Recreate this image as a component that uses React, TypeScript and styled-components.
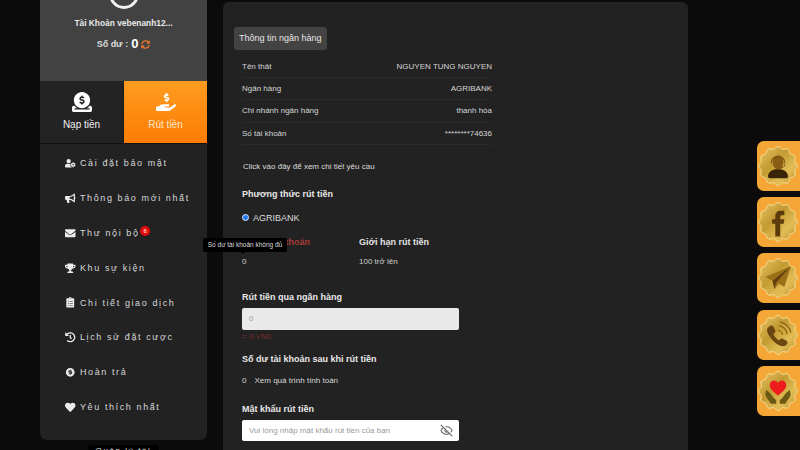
import React from "react";
import styled, { createGlobalStyle } from "styled-components";
import {
  FaUserCog, FaBullhorn, FaEnvelope, FaTrophy, FaClipboardList, FaHistory, FaHeart, FaHandHoldingUsd, FaSyncAlt,
} from "react-icons/fa";
import { FaCircleDollarToSlot } from "react-icons/fa6";
import { RiMoneyDollarCircleFill } from "react-icons/ri";
import { EyeOff } from "lucide-react";

const Global = createGlobalStyle`
  html, body { margin: 0; padding: 0; background: #0b0b0b; }
  body { font-family: "Liberation Sans", Arial, sans-serif; color: #ddd; }
`;

const Page = styled.div`
  position: relative;
  width: 800px;
  height: 450px;
  overflow: hidden;
  display: flex;
  align-items: flex-start;
  gap: 16px;
  padding-left: 40px;
  box-sizing: border-box;
`;

const SideColumn = styled.div`
  width: 167px;
  flex: none;
  display: flex;
  flex-direction: column;
  align-items: center;
`;

const Sidebar = styled.aside`
  width: 100%;
  height: 440px;
  background: #222222;
  border-radius: 0 0 7px 7px;
  overflow: hidden;
`;

const Profile = styled.div`
  height: 81px;
  background: #424242;
  display: flex;
  flex-direction: column;
  align-items: center;
`;

const Avatar = styled.div`
  width: 30px;
  height: 30px;
  margin-top: -21px;
  box-sizing: border-box;
  border: 3px solid #f2f2f2;
  border-radius: 50%;
  flex: none;
`;

const UserName = styled.div`
  margin-top: 9px;
  font-size: 8.4px;
  font-weight: 700;
  line-height: 11px;
  color: #e8e8e8;
`;

const Balance = styled.div`
  margin-top: 8px;
  display: flex;
  align-items: center;
  gap: 3px;
  font-size: 9px;
  font-weight: 700;
  line-height: 14px;
  color: #dedede;
`;

const BalanceValue = styled.span`
  font-size: 13px;
  color: #fff;
`;

const RefreshIcon = styled(FaSyncAlt)`
  width: 9px;
  height: 9px;
  color: #e8742a;
`;

const Tabs = styled.div`
  height: 63px;
  display: grid;
  grid-template-columns: 83px 83px;
  gap: 1px;
  border-bottom: 1px solid #111;
  box-sizing: border-box;
  background: #1a1a1a;
`;

const Tab = styled.div<{ $active?: boolean }>`
  display: flex;
  flex-direction: column;
  align-items: center;
  padding-top: 11px;
  box-sizing: border-box;
  gap: 6px;
  font-size: 10px;
  line-height: 13px;
  color: ${(p) => (p.$active ? "#ffe6c8" : "#f0f0f0")};
  background: ${(p) => (p.$active ? "linear-gradient(180deg, #ff9c20 0%, #fb7c05 100%)" : "#232323")};
  svg { width: 20px; height: 20px; color: #fff; }
`;

const Menu = styled.nav`
  display: flex;
  flex-direction: column;
  padding-top: 2px;
`;

const MenuItem = styled.div`
  height: 34.8px;
  display: flex;
  align-items: center;
  padding-left: 25px;
  gap: 4.5px;
  font-size: 9px;
  letter-spacing: 1.6px;
  color: #d8d8d8;
  white-space: nowrap;
  svg { width: 10.5px; height: 10.5px; color: #ececec; flex: none; }
`;

const Badge = styled.span`
  width: 10px;
  height: 10px;
  margin: -3px 0 0 -4px;
  border-radius: 50%;
  background: #e30c0c;
  color: #fff;
  font-size: 6px;
  letter-spacing: 0;
  line-height: 10px;
  text-align: center;
`;

const Footnote = styled.div`
  margin-top: 5px;
  padding: 0 8px;
  background: #000;
  border-radius: 4px;
  font-size: 8px;
  letter-spacing: 1.6px;
  line-height: 11px;
  color: #ddd;
`;

const Main = styled.main`
  width: 465px;
  height: 460px;
  flex: none;
  margin-top: 2px;
  box-sizing: border-box;
  padding: 25px 0 0 11px;
  background: #222222;
  border-radius: 6px 6px 0 0;
`;

const InfoButton = styled.div`
  display: inline-block;
  height: 23px;
  padding: 0 5px;
  background: #434343;
  border-radius: 3px;
  font-size: 9px;
  line-height: 23px;
  color: #e6e6e6;
`;

const Content = styled.div`
  width: 250px;
  margin-left: 8px;
  margin-top: 6px;
`;

const InfoRow = styled.div`
  height: 22.2px;
  display: flex;
  align-items: center;
  justify-content: space-between;
  box-sizing: border-box;
  border-bottom: 1px solid #2a2a2a;
  font-size: 8px;
  color: #d6d6d6;
`;

const Hint = styled.div`
  margin: 16px 0 0 1px;
  font-size: 8px;
  line-height: 11px;
  color: #dcdcdc;
`;

const SectionTitle = styled.div<{ $top: number }>`
  margin-top: ${(p) => p.$top}px;
  font-size: 9px;
  font-weight: 700;
  line-height: 12px;
  color: #e8e8e8;
  white-space: nowrap;
`;

const RadioRow = styled.div`
  margin-top: 12px;
  display: flex;
  align-items: center;
  gap: 4px;
  font-size: 9px;
  line-height: 12px;
  color: #dedede;
`;

const RadioDot = styled.span`
  width: 7px;
  height: 7px;
  box-sizing: border-box;
  border-radius: 50%;
  background: #1f78f0;
  border: 1.5px solid #dfe8f5;
  flex: none;
`;

const Columns = styled.div`
  margin-top: 12px;
  display: grid;
  grid-template-columns: 117px 1fr;
  row-gap: 8px;
  font-size: 8px;
  line-height: 11px;
  color: #d0d0d0;
`;

const ColumnTitle = styled.div<{ $warn?: boolean }>`
  font-size: 9px;
  font-weight: 700;
  line-height: 12px;
  color: ${(p) => (p.$warn ? "#a83a3a" : "#e4e4e4")};
`;

const FieldBox = styled.div<{ $disabled?: boolean }>`
  margin-top: 5px;
  width: 217px;
  height: ${(p) => (p.$disabled ? 22 : 21)}px;
  box-sizing: border-box;
  padding: 0 6px 0 7px;
  display: flex;
  align-items: center;
  justify-content: space-between;
  border-radius: 2px;
  background: ${(p) => (p.$disabled ? "#e9e9e9" : "#ffffff")};
  font-size: 8px;
  color: #9a9a9a;
  white-space: nowrap;
  svg { width: 13px; height: 13px; color: #666; }
`;

const Converted = styled.div`
  margin-top: 1px;
  font-size: 8px;
  line-height: 11px;
  color: #7c2b2b;
`;

const ResultRow = styled.div`
  margin-top: 10px;
  display: flex;
  gap: 8px;
  font-size: 8px;
  line-height: 11px;
  color: #d8d8d8;
  white-space: nowrap;
`;

const Tooltip = styled.div`
  position: absolute;
  left: 203px;
  top: 238px;
  width: 84px;
  height: 14px;
  background: #000;
  border-radius: 2px;
  font-size: 6.5px;
  line-height: 14px;
  text-align: center;
  color: #dcdcdc;
  white-space: nowrap;
  &::after {
    content: "";
    position: absolute;
    left: 38px;
    top: 14px;
    border: 2.5px solid transparent;
    border-top-color: #000;
  }
`;

const FloatStack = styled.div`
  position: absolute;
  left: 757px;
  top: 141px;
  display: flex;
  flex-direction: column;
  gap: 6.2px;
`;

const FloatTile = styled.div`
  width: 50px;
  height: 50px;
  background: #f4a636;
  border-radius: 7px;
  display: flex;
  align-items: center;
  padding-left: 1px;
  box-sizing: border-box;
  svg { width: 40px; height: 44px; flex: none; }
`;

const scallop = (() => {
  const n = 12;
  const pts: string[] = [];
  for (let i = 0; i <= 144; i++) {
    const a = (i / 144) * Math.PI * 2;
    const r = 20.2 + 1.2 * Math.cos(a * n);
    pts.push(`${(22 + r * Math.sin(a)).toFixed(2)},${(22 - r * Math.cos(a)).toFixed(2)}`);
  }
  return pts.join(" ");
})();

const Medal: React.FC<{ id: string; children: React.ReactNode }> = ({ id, children }) => (
  <svg viewBox="0 0 44 44" preserveAspectRatio="xMidYMid meet">
    <defs>
      <linearGradient id={id} x1="0" y1="0" x2="1" y2="1">
        <stop offset="0" stopColor="#e7c766" />
        <stop offset="0.4" stopColor="#c39a32" />
        <stop offset="0.7" stopColor="#e2bd55" />
        <stop offset="1" stopColor="#b88a28" />
      </linearGradient>
    </defs>
    <polygon points={scallop} fill={`url(#${id})`} stroke="#f8e4a2" strokeWidth="1" />
    {children}
  </svg>
);

const ICON = "#5c3c0c";

const menu = [
  { icon: <FaUserCog />, label: "Cài đặt bảo mật" },
  { icon: <FaBullhorn />, label: "Thông báo mới nhất" },
  { icon: <FaEnvelope />, label: "Thư nội bộ", badge: "6" },
  { icon: <FaTrophy />, label: "Khu sự kiện" },
  { icon: <FaClipboardList />, label: "Chi tiết giao dịch" },
  { icon: <FaHistory />, label: "Lịch sử đặt cược" },
  { icon: <RiMoneyDollarCircleFill />, label: "Hoàn trả" },
  { icon: <FaHeart />, label: "Yêu thích nhất" },
];

const bank = [
  ["Tên thât", "NGUYEN TUNG NGUYEN"],
  ["Ngân hàng", "AGRIBANK"],
  ["Chi nhánh ngân hàng", "thanh hóa"],
  ["Số tài khoản", "********74636"],
];

export default function App() {
  return (
    <>
      <Global />
      <Page>
        <SideColumn>
          <Sidebar>
            <Profile>
              <Avatar />
              <UserName>Tài Khoản vebenanh12...</UserName>
              <Balance>
                Số dư : <BalanceValue>0</BalanceValue>
                <RefreshIcon />
              </Balance>
            </Profile>
            <Tabs>
              <Tab>
                <FaCircleDollarToSlot />
                Nạp tiền
              </Tab>
              <Tab $active>
                <FaHandHoldingUsd />
                Rút tiền
              </Tab>
            </Tabs>
            <Menu>
              {menu.map((m) => (
                <MenuItem key={m.label}>
                  {m.icon}
                  {m.label}
                  {m.badge && <Badge>{m.badge}</Badge>}
                </MenuItem>
              ))}
            </Menu>
          </Sidebar>
          <Footnote>Quản lý tài</Footnote>
        </SideColumn>

        <Main>
          <InfoButton>Thông tin ngân hàng</InfoButton>
          <Content>
            {bank.map(([k, v]) => (
              <InfoRow key={k}>
                <span>{k}</span>
                <span>{v}</span>
              </InfoRow>
            ))}
            <Hint>Click vào đây để xem chi tiết yêu cầu</Hint>
            <SectionTitle $top={16}>Phương thức rút tiền</SectionTitle>
            <RadioRow>
              <RadioDot />
              AGRIBANK
            </RadioRow>
            <Columns>
              <ColumnTitle $warn>Số dư tài khoản</ColumnTitle>
              <ColumnTitle>Giới hạn rút tiền</ColumnTitle>
              <div>0</div>
              <div>100 trở lên</div>
            </Columns>
            <SectionTitle $top={24}>Rút tiền qua ngân hàng</SectionTitle>
            <FieldBox $disabled>0</FieldBox>
            <Converted>= 0 VND</Converted>
            <SectionTitle $top={11}>Số dư tài khoản sau khi rút tiền</SectionTitle>
            <ResultRow>
              <span>0</span>
              <span>Xem quá trình tính toán</span>
            </ResultRow>
            <SectionTitle $top={17}>Mật khẩu rút tiền</SectionTitle>
            <FieldBox>
              Vui lòng nhập mật khẩu rút tiền của bạn
              <EyeOff />
            </FieldBox>
          </Content>
        </Main>

        <Tooltip>Số dư tài khoản không đủ</Tooltip>

        <FloatStack>
          <FloatTile>
            <Medal id="m1">
              <ellipse cx="22" cy="18" rx="6" ry="7.5" fill="#8a5c14" />
              <path d="M14.5 19c0-10 15-10 15 0" fill="none" stroke="#7a5210" strokeWidth="1.3" />
              <path d="M29.5 20c0 3-3 4.500-6 4.500" fill="none" stroke="#7a5210" strokeWidth="1" />
              <path d="M11 34c0-6 5-8 8-8.500h6c3 .5 8 2.500 8 8.500 0 1-2 1.500-4 1.500H15c-2 0-4-.5-4-1.500z" fill="#3a2408" />
            </Medal>
          </FloatTile>
          <FloatTile>
            <Medal id="m2">
              <path d="M19 38V24h-3.500v-5H19v-3.500c0-4 2.500-6 6-6h4v5h-2.500c-1.500 0-2 .7-2 2V19H29l-.8 5h-3.700v14z" fill={ICON} />
            </Medal>
          </FloatTile>
          <FloatTile>
            <Medal id="m3">
              <path d="M36 9L8 21l8 4 2 9 5-6 6 4z" fill="#9c6f18" />
              <path d="M36 9L16 25l2 9 2-7z" fill="#5f4010" />
            </Medal>
          </FloatTile>
          <FloatTile>
            <Medal id="m4">
              <path d="M12 13c2-2 4-2 5 0l2 4c.5 1 0 2-1 3l-1 1c1 3 3 5 6 7l1-1c1-1 2-1.500 3-1l4 2c2 1 2 3.500 0 5-3 2.500-7 1.500-12-2.500S9.500 20 10 16c.1-1 1-2 2-3z" fill="#6a4610" />
              <path d="M22 17a5 5 0 0 1 5 5M23 12a10 10 0 0 1 9 9M24 7.500a14 14 0 0 1 12 12" fill="none" stroke="#8f6518" strokeWidth="1.400" />
            </Medal>
          </FloatTile>
          <FloatTile>
            <Medal id="m5">
              <path d="M22 27c-6-4.500-9-7.500-9-11.500 0-3 2.200-5 4.700-5 1.800 0 3.300 1 4.300 2.700 1-1.700 2.500-2.700 4.300-2.700 2.500 0 4.700 2 4.700 5 0 4-3 7-9 11.500z" fill="#ee1c1c" />
              <path d="M9 21c3 2 5 4 7 7 1.500 2 3 3 4 4v4h-6c-1-3-5-6-6-10z" fill="#6a5a14" />
              <path d="M35 21c-3 2-5 4-7 7-1.500 2-3 3-4 4v4h6c1-3 5-6 6-10z" fill="#6a5a14" />
            </Medal>
          </FloatTile>
        </FloatStack>
      </Page>
    </>
  );
}
